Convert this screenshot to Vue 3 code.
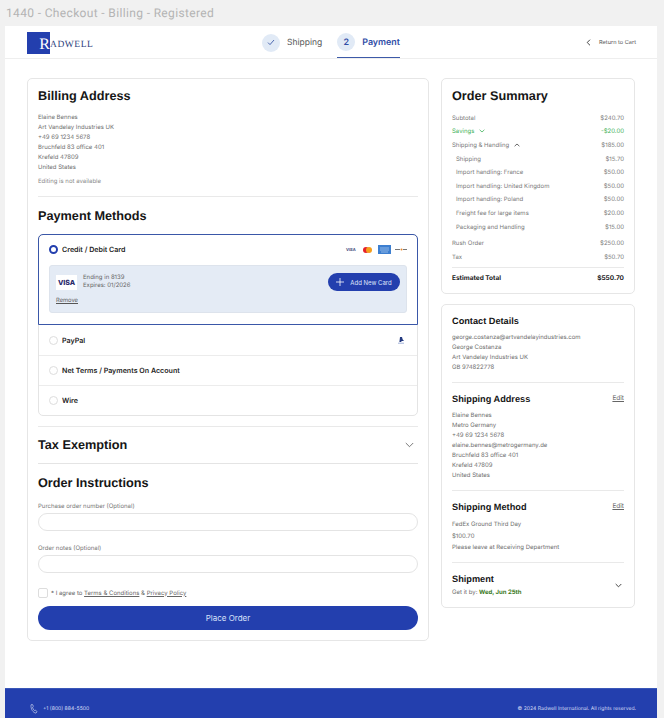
<script setup>
const billing = [
  "Elaine Bennes",
  "Art Vandelay Industries UK",
  "+49 69 1234 5678",
  "Bruchfeld 83 office 401",
  "Krefeld 47809",
  "United States",
];
const methods = ["PayPal", "Net Terms / Payments On Account", "Wire"];
const charges = [
  ["Shipping", "$15.70"],
  ["Import handling: France", "$50.00"],
  ["Import handling: United Kingdom", "$50.00"],
  ["Import handling: Poland", "$50.00"],
  ["Freight fee for large items", "$20.00"],
  ["Packaging and Handling", "$15.00"],
];
const contact = [
  "george.costanza@artvandelayindustries.com",
  "George Costanza",
  "Art Vandelay Industries UK",
  "GB 974822778",
];
const shipTo = [
  "Elaine Bennes",
  "Metro Germany",
  "+49 69 1234 5678",
  "elaine.bennes@metrogermany.de",
  "Bruchfeld 83 office 401",
  "Krefeld 47809",
  "United States",
];
const shipMethod = ["FedEx Ground Third Day", "$100.70", "Please leave at Receiving Department"];
</script>

<template>
  <div class="page">
    <div class="frame-title">1440 - Checkout - Billing - Registered</div>
    <div class="frame">
      <header class="topbar">
        <div class="logo">
          <span class="logo-mark">R</span>
          <span class="logo-word">ADWELL</span>
        </div>
        <nav class="stepper">
          <div class="step">
            <span class="step-dot">
              <svg width="8" height="7" viewBox="0 0 8 7" fill="none">
                <path d="M1 3.6 3 5.6 7 1" stroke="#3d5aa8" stroke-width="0.9" />
              </svg>
            </span>
            <span>Shipping</span>
          </div>
          <div class="step active">
            <span class="step-dot">2</span>
            <span>Payment</span>
          </div>
        </nav>
        <a class="back">
          <svg width="5" height="7" viewBox="0 0 5 7" fill="none">
            <path d="M4 .7 1.200 3.500 4 6.300" stroke="#333" stroke-width="0.9" />
          </svg>
          Return to Cart
        </a>
      </header>

      <main class="content">
        <section class="card left">
          <h2>Billing Address</h2>
          <div class="address">
            <div v-for="line in billing" :key="line">{{ line }}</div>
          </div>
          <div class="note">Editing is not available</div>
          <hr class="rule first" />

          <h2 class="pay-title">Payment Methods</h2>
          <div class="methods">
            <div class="method-open">
              <div class="method-head">
                <span class="radio on"></span>
                <b>Credit / Debit Card</b>
                <div class="brands">
                  <span class="visa-mini">VISA</span>
                  <svg class="mc" width="9" height="6" viewBox="0 0 9 6">
                    <circle cx="3" cy="3" r="3" fill="#e5202a" />
                    <circle cx="6" cy="3" r="3" fill="#f59e1c" />
                  </svg>
                  <svg class="amex" width="13" height="9" viewBox="0 0 13 9">
                    <rect width="13" height="9" fill="#3d7fd0" />
                    <path d="M2 3h9M2 5h9M3 7h7" stroke="#b7d3f2" stroke-width="0.7" />
                  </svg>
                  <svg class="disc" width="12" height="3" viewBox="0 0 12 3">
                    <rect y="1" width="5" height="1" fill="#777" />
                    <circle cx="6.500" cy="1.500" r="1" fill="#e8872c" />
                    <rect x="8" y="1" width="4" height="1" fill="#777" />
                  </svg>
                </div>
              </div>
              <div class="saved-card">
                <div class="saved-top">
                  <span class="visa-box">VISA</span>
                  <div class="saved-info">
                    <div>Ending in 8139</div>
                    <div>Expires: 01/2026</div>
                  </div>
                  <button class="add-card">
                    <svg width="8" height="8" viewBox="0 0 8 8" fill="none">
                      <path d="M4 0v8M0 4h8" stroke="#fff" stroke-width="0.8" />
                    </svg>
                    Add New Card
                  </button>
                </div>
                <a class="remove">Remove</a>
              </div>
            </div>
            <div v-for="m in methods" :key="m" class="method-row">
              <span class="radio"></span>
              <b>{{ m }}</b>
              <svg v-if="m === 'PayPal'" class="paypal" width="6" height="7" viewBox="0 0 6 7">
                <path d="M2 0h2l.6 2.200L6 4H3.600L3.200 5H1.400Z" fill="#253b80" />
                <path d="M0 6.200h6" stroke="#8aa0cf" stroke-width="0.8" />
              </svg>
            </div>
          </div>

          <hr class="rule tax-top" />
          <div class="tax-row">
            <h2>Tax Exemption</h2>
            <svg width="9" height="6" viewBox="0 0 9 6" fill="none">
              <path d="M.8 1 4.500 4.700 8.200 1" stroke="#555" stroke-width="0.8" />
            </svg>
          </div>

          <h2 class="instr-title">Order Instructions</h2>
          <label class="field-label po">Purchase order number (Optional)</label>
          <input class="field" type="text" />
          <label class="field-label notes">Order notes (Optional)</label>
          <input class="field" type="text" />
          <div class="agree">
            <span class="check"></span>
            <span>* I agree to <u>Terms &amp; Conditions</u> &amp; <u>Privacy Policy</u></span>
          </div>
          <button class="place">Place Order</button>
        </section>

        <aside class="side">
          <section class="card summary">
            <h2>Order Summary</h2>
            <div class="rows">
              <div class="row"><span>Subtotal</span><span>$240.70</span></div>
              <div class="row green">
                <span>Savings
                  <svg class="caret" width="6" height="4" viewBox="0 0 6 4" fill="none">
                    <path d="M.6.8 3 3 5.400.8" stroke="#3fb25a" stroke-width="0.8" />
                  </svg>
                </span>
                <span>-$20.00</span>
              </div>
              <div class="row">
                <span>Shipping &amp; Handling
                  <svg class="caret" width="6" height="4" viewBox="0 0 6 4" fill="none">
                    <path d="M.6 3.200 3 1 5.400 3.200" stroke="#444" stroke-width="0.8" />
                  </svg>
                </span>
                <span>$185.00</span>
              </div>
              <div v-for="c in charges" :key="c[0]" class="row sub">
                <span>{{ c[0] }}</span><span>{{ c[1] }}</span>
              </div>
            </div>
            <div class="rows extra">
              <div class="row"><span>Rush Order</span><span>$250.00</span></div>
              <div class="row"><span>Tax</span><span>$50.70</span></div>
            </div>
            <hr class="rule total-rule" />
            <div class="row total"><span>Estimated Total</span><span>$550.70</span></div>
          </section>

          <section class="card details">
            <h3>Contact Details</h3>
            <div class="lines">
              <div v-for="line in contact" :key="line">{{ line }}</div>
            </div>
            <hr class="rule gap" />

            <div class="detail-head">
              <h3>Shipping Address</h3>
              <a class="edit">Edit</a>
            </div>
            <div class="lines">
              <div v-for="line in shipTo" :key="line">{{ line }}</div>
            </div>
            <hr class="rule gap" />

            <div class="detail-head">
              <h3>Shipping Method</h3>
              <a class="edit">Edit</a>
            </div>
            <div class="lines loose">
              <div v-for="line in shipMethod" :key="line">{{ line }}</div>
            </div>
            <hr class="rule gap" />

            <div class="shipment">
              <div>
                <h3>Shipment</h3>
                <div class="eta">Get it by: <b>Wed, Jun 25th</b></div>
              </div>
              <svg width="7" height="5" viewBox="0 0 7 5" fill="none">
                <path d="M.7 1 3.500 3.800 6.300 1" stroke="#333" stroke-width="0.9" />
              </svg>
            </div>
          </section>
        </aside>
      </main>

      <footer class="footer">
        <div class="phone">
          <svg width="8" height="10" viewBox="0 0 8 10" fill="none">
            <path
              d="M1 .8 2.400.4l1 2-.9.8c.2 1.300.9 2.500 1.900 3.300l1-.5L7 7.800l-1 1.300C3 8.800.6 5 1 .8Z"
              stroke="#dfe5f7"
              stroke-width="0.6"
            />
          </svg>
          +1 (800) 884-5500
        </div>
        <div>© 2024 Radwell International. All rights reserved.</div>
      </footer>
    </div>
  </div>
</template>

<style>
html,
body {
  margin: 0;
  background: #f1f1f1;
}
</style>

<style scoped>
.page {
  height: 718px;
  overflow: hidden;
  font-family: Inter, "Liberation Sans", sans-serif;
  color: #6e6e6e;
  font-size: 6px;
  text-rendering: geometricPrecision;
}

.frame-title {
  height: 26px;
  padding: 6px 0 0 6px;
  box-sizing: border-box;
  font-family: Roboto, sans-serif;
  font-size: 12px;
  line-height: 14px;
  letter-spacing: 0.35px;
  color: #b4b4b4;
}

.frame {
  width: 652px;
  height: 692px;
  margin-left: 5px;
  background: #fff;
  display: flex;
  flex-direction: column;
}

.topbar {
  height: 33px;
  box-sizing: border-box;
  border-bottom: 1px solid #eee;
  padding: 1px 21px 0 22px;
  display: grid;
  grid-template-columns: 235px auto 1fr;
  align-items: center;
}

.logo {
  display: flex;
  align-items: flex-end;
  height: 22px;
}

.logo-mark {
  width: 23px;
  height: 22px;
  box-sizing: border-box;
  background: #233fae;
  color: #fff;
  font-family: "Liberation Serif", serif;
  font-size: 16px;
  line-height: 25px;
  text-align: right;
}

.logo-word {
  font-family: "Liberation Serif", serif;
  font-size: 9.500px;
  line-height: 17px;
  letter-spacing: 0.55px;
  color: #2c3d7c;
}

.stepper {
  display: flex;
  gap: 15px;
  height: 100%;
  font-size: 8.500px;
  color: #555;
}

.step {
  display: flex;
  align-items: center;
  gap: 7px;
  height: 100%;
  box-sizing: border-box;
}

.step-dot {
  width: 18px;
  height: 18px;
  border-radius: 50%;
  background: #e1eaf6;
  display: flex;
  align-items: center;
  justify-content: center;
}

.step.active {
  border-bottom: 1px solid #3d5aa8;
  color: #2e4ca6;
  font-weight: 600;
  font-size: 8.900px;
}

.back {
  justify-self: end;
  display: flex;
  align-items: center;
  gap: 8px;
  font-size: 5.600px;
  color: #555;
}

.content {
  padding: 19px 22px 0;
  display: flex;
  align-items: flex-start;
  gap: 12px;
}

.card {
  box-sizing: border-box;
  background: #fff;
  border: 1px solid #e6e6e6;
  border-radius: 5px;
  padding: 9px 10px 10px;
}

.left {
  width: 402px;
}

h2,
h3 {
  margin: 0;
  font-family: "Liberation Sans", sans-serif;
  font-weight: 700;
  color: #161616;
}

h2 {
  font-size: 12.700px;
  line-height: 16px;
}

h3 {
  font-size: 9.200px;
  line-height: 12px;
}

.address {
  margin-top: 9px;
  line-height: 10px;
}

.note {
  margin-top: 4px;
  line-height: 10px;
  color: #8a8a8a;
}

.rule {
  margin: 0;
  border: 0;
  border-top: 1px solid #e9e9e9;
}

.rule.first {
  margin-top: 9px;
}

.pay-title {
  margin-top: 11px;
}

.methods {
  margin-top: 10px;
  border: 1px solid #e4e4e4;
  border-radius: 5px;
}

.method-open {
  margin: -1px -1px 0;
  height: 91px;
  box-sizing: border-box;
  border: 1px solid #3a57a8;
  border-radius: 5px 5px 0 0;
  padding: 0 10px;
}

.method-head {
  height: 29px;
  display: flex;
  align-items: center;
  gap: 4px;
}

.method-head b,
.method-row b {
  font-size: 7.100px;
  font-weight: 600;
  color: #222;
}

.radio {
  width: 9px;
  height: 9px;
  box-sizing: border-box;
  border: 1px solid #ddd;
  border-radius: 50%;
  background: #fff;
}

.radio.on {
  border: 2.500px solid #233fae;
}

.brands {
  margin-left: auto;
  display: flex;
  align-items: center;
}

.visa-mini {
  width: 10px;
  font-size: 4px;
  font-weight: 700;
  color: #444d7c;
}

.mc {
  margin-left: 7px;
}

.amex {
  margin-left: 6px;
}

.disc {
  margin-left: 4px;
}

.saved-card {
  height: 48px;
  box-sizing: border-box;
  margin-top: 1px;
  padding: 7px 6px 0;
  background: #e4ebf5;
  border: 1px solid #dde3ec;
  border-radius: 3px;
}

.saved-top {
  display: flex;
  align-items: center;
  gap: 6px;
  height: 18px;
}

.visa-box {
  width: 21px;
  height: 15px;
  background: #fff;
  color: #2a2a6c;
  font-size: 7px;
  font-weight: 800;
  line-height: 15px;
  text-align: center;
}

.saved-info {
  line-height: 8px;
  color: #666;
}

.add-card {
  margin-left: auto;
  width: 72px;
  height: 18px;
  border: 0;
  border-radius: 9px;
  padding: 0;
  background: #233fae;
  color: #dfe6fa;
  font-family: inherit;
  font-size: 6px;
  display: flex;
  align-items: center;
  justify-content: center;
  gap: 6px;
}

.remove {
  display: block;
  margin-top: 6px;
  line-height: 8px;
  font-size: 5.800px;
  text-decoration: underline;
  color: #555;
}

.method-row {
  height: 30px;
  box-sizing: border-box;
  padding: 0 10px;
  display: flex;
  align-items: center;
  gap: 4px;
  border-top: 1px solid #ececec;
}

.method-open + .method-row {
  border-top: 0;
}

.paypal {
  margin-left: auto;
  margin-right: 3px;
}

.rule.tax-top {
  margin-top: 10px;
}

.tax-row {
  height: 36px;
  border-bottom: 1px solid #e4e4e4;
  display: flex;
  align-items: center;
  justify-content: space-between;
  padding-right: 4px;
}

.instr-title {
  margin-top: 11px;
}

.field-label {
  display: block;
  line-height: 8px;
  color: #777;
}

.field-label.po {
  margin-top: 12px;
}

.field-label.notes {
  margin-top: 14px;
}

.field {
  display: block;
  width: 100%;
  height: 18px;
  margin-top: 2px;
  box-sizing: border-box;
  border: 1px solid #e4e4e4;
  border-radius: 9px;
  background: #fff;
  outline: none;
}

.agree {
  margin-top: 15px;
  height: 10px;
  display: flex;
  align-items: center;
  gap: 3px;
  color: #666;
}

.check {
  width: 10px;
  height: 10px;
  box-sizing: border-box;
  border: 1px solid #ddd;
  border-radius: 2px;
}

.place {
  display: block;
  width: 100%;
  height: 24px;
  margin-top: 8px;
  border: 0;
  border-radius: 12px;
  background: #233fae;
  color: #d9e2fa;
  font-family: inherit;
  font-size: 8px;
}

.side {
  width: 194px;
  display: flex;
  flex-direction: column;
  gap: 10px;
}

.summary {
  padding-bottom: 8.500px;
}

.rows {
  margin-top: 7.500px;
}

.rows.extra {
  margin-top: 3.100px;
}

.row {
  height: 13.600px;
  display: flex;
  align-items: center;
  justify-content: space-between;
  color: #7a7a7a;
}

.row.sub {
  padding-left: 4px;
}

.row.green {
  color: #3fb25a;
}

.caret {
  margin-left: 3px;
}

.total-rule {
  margin-top: 2.600px;
}

.row.total {
  margin-top: 3.500px;
  font-size: 6.500px;
  font-weight: 700;
  color: #222;
}

.details {
  padding: 10px 10px 9px;
}

.lines {
  margin-top: 6px;
  line-height: 10px;
}

.lines.loose {
  line-height: 11.200px;
}

.rule.gap {
  margin: 9px 0 10px;
}

.detail-head {
  display: flex;
  justify-content: space-between;
}

.edit {
  font-size: 6.500px;
  line-height: 10px;
  text-decoration: underline;
  color: #666;
}

.shipment {
  margin-top: 1px;
  display: flex;
  align-items: center;
  justify-content: space-between;
  padding-right: 2px;
}

.eta {
  margin-top: 3px;
  line-height: 10px;
}

.eta b {
  color: #3b7a1e;
  font-weight: 700;
}

.footer {
  margin-top: auto;
  height: 30px;
  box-sizing: border-box;
  padding: 10px 21px 0 25px;
  background: #233fae;
  border-top: 1px solid #3a57b8;
  display: flex;
  align-items: center;
  justify-content: space-between;
  color: #d5ddf5;
  font-size: 5.100px;
}

.phone {
  display: flex;
  align-items: center;
  gap: 5px;
}
</style>
